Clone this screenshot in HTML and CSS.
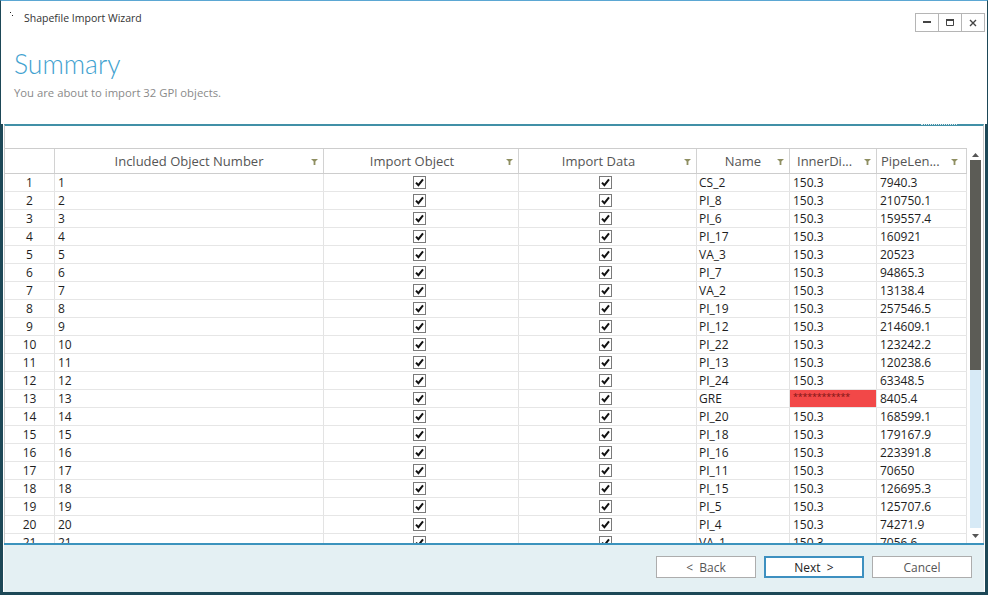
FILE: index.html
```html
<!DOCTYPE html>
<html>
<head>
<meta charset="utf-8">
<link rel="stylesheet" href="styles.css">
</head>
<body>
<div class="window">
  <div class="titlebar">
    <svg class="app-icon" width="4" height="6" viewBox="0 0 4 6"><rect x="0" y="0" width="1" height="1" fill="#222"/><rect x="2" y="3" width="1" height="1" fill="#222"/></svg>
    <span class="title">Shapefile Import Wizard</span>
    <div class="controls">
      <span class="ctl"><svg width="8" height="3" viewBox="0 0 8 3"><rect x="0" y="0" width="8" height="2" fill="#444"/></svg></span>
      <span class="ctl"><svg width="8" height="7" viewBox="0 0 8 7"><path d="M0.5 0.5H7.5V6.5H0.5Z" fill="none" stroke="#444"/><rect x="0" y="0" width="8" height="2" fill="#444"/></svg></span>
      <span class="ctl"><svg width="8" height="8" viewBox="0 0 8 8"><path d="M1 1L7 7M7 1L1 7" stroke="#444" stroke-width="1.4"/></svg></span>
    </div>
  </div>
  <div class="intro">
    <h1 class="heading">Summary</h1>
    <p class="subtitle">You are about to import 32 GPI objects.</p>
  </div>
  <div class="main">
    <div class="grid">
      <span class="grip"></span>
      <div class="group-panel"></div>
      <div class="grid-body">
        <div class="table">
          <div class="head row-grid">
            <div class="hc"></div>
            <div class="hc">Included Object Number<svg class="funnel" width="7" height="6" viewBox="0 0 7 6"><path d="M0 0H7L4.4 2.6V6H2.6V2.6Z"/></svg></div>
            <div class="hc shift">Import Object<svg class="funnel" width="7" height="6" viewBox="0 0 7 6"><path d="M0 0H7L4.4 2.6V6H2.6V2.6Z"/></svg></div>
            <div class="hc shift">Import Data<svg class="funnel" width="7" height="6" viewBox="0 0 7 6"><path d="M0 0H7L4.4 2.6V6H2.6V2.6Z"/></svg></div>
            <div class="hc">Name<svg class="funnel" width="7" height="6" viewBox="0 0 7 6"><path d="M0 0H7L4.4 2.6V6H2.6V2.6Z"/></svg></div>
            <div class="hc left inner">InnerDi...<svg class="funnel" width="7" height="6" viewBox="0 0 7 6"><path d="M0 0H7L4.4 2.6V6H2.6V2.6Z"/></svg></div>
            <div class="hc left pipe">PipeLen...<svg class="funnel far" width="7" height="6" viewBox="0 0 7 6"><path d="M0 0H7L4.4 2.6V6H2.6V2.6Z"/></svg></div>
          </div>
          <div class="rows" id="rows"></div>
        </div>
        <div class="vscroll">
          <div class="sb-up"><svg width="7" height="4" viewBox="0 0 7 4"><path d="M0 4L3.5 0L7 4Z" fill="#555"/></svg></div>
          <div class="thumb"></div>
          <div class="track"></div>
          <div class="sb-down"><svg width="7" height="4" viewBox="0 0 7 4"><path d="M0 0L3.5 4L7 0Z" fill="#555"/></svg></div>
        </div>
      </div>
    </div>
    <div class="footer">
      <button class="btn">&lt;&nbsp;&nbsp;Back</button>
      <button class="btn primary">Next&nbsp;&nbsp;&gt;</button>
      <button class="btn">Cancel</button>
    </div>
  </div>
</div>
<script src="app.js"></script>
</body>
</html>
```
FILE: styles.css
```css
* { box-sizing: border-box; }
html, body { margin: 0; padding: 0; }
body {
  width: 988px;
  height: 595px;
  overflow: hidden;
  background: #fff;
  font-family: "Open Sans", "Noto Sans", sans-serif;
}
svg { display: block; }
.window {
  width: 988px;
  height: 595px;
  border: 1px solid #1d4857;
  border-top-color: #5ba7d3;
  display: flex;
  flex-direction: column;
  background: #fff;
}
.titlebar {
  height: 39px;
  flex: none;
  display: flex;
  align-items: flex-start;
}
.app-icon { margin: 11px 0 0 9px; flex: none; }
.title {
  margin: 9px 0 0 10px;
  font-size: 10.5px;
  line-height: 16px;
  color: #333;
}
.controls {
  margin: 12px 2px 0 auto;
  display: flex;
}
.ctl {
  width: 24px;
  height: 19px;
  border: 1px solid #b5b5b5;
  background: #fff;
  display: flex;
  align-items: center;
  justify-content: center;
}
.ctl + .ctl { margin-left: -1px; }

.intro {
  height: 84px;
  flex: none;
  padding-left: 13px;
}
.heading {
  margin: 0;
  padding-top: 8px;
  font-family: Lato, "Open Sans", sans-serif;
  font-weight: 300;
  font-size: 26.5px;
  line-height: 32px;
  color: #42a2d0;
}
.subtitle {
  margin: 6px 0 0 0;
  font-size: 11.3px;
  line-height: 14px;
  color: #8a8a8a;
}

.main {
  flex: 1;
  min-height: 0;
  display: flex;
  flex-direction: column;
  border: 2px solid #1d4857;
  border-top: 0;
}
.grid {
  flex: 1;
  min-height: 0;
  margin: 0 1px;
  border-left: 1px solid #c8c8c8;
  border-right: 1px solid #c8c8c8;
  border-top: 2px solid #4190a7;
  display: flex;
  flex-direction: column;
  position: relative;
}
.grip {
  position: absolute;
  right: 26px;
  top: -2px;
  width: 36px;
  height: 0;
  border-top: 1px dotted rgba(255, 255, 255, 0.85);
}
.group-panel { height: 22px; flex: none; }
.grid-body {
  flex: 1;
  min-height: 0;
  display: flex;
}
.table {
  width: 962px;
  flex: none;
  display: flex;
  flex-direction: column;
  min-height: 0;
  overflow: hidden;
}
.row-grid {
  display: grid;
  grid-template-columns: 50px 269px 195px 178px 93px 87px 90px;
}
.head {
  height: 26px;
  flex: none;
  border-top: 1px solid #cdcdcd;
  border-bottom: 1px solid #cdcdcd;
}
.hc {
  position: relative;
  border-right: 1px solid #d2d2d2;
  display: flex;
  align-items: center;
  justify-content: center;
  font-size: 13px;
  line-height: 24px;
  color: #555;
  white-space: nowrap;
}
.hc.shift { padding-right: 18px; }
.hc.left { justify-content: flex-start; }
.hc.inner { padding-left: 7px; }
.hc.pipe { padding-left: 4px; }
.funnel {
  position: absolute;
  right: 5px;
  top: 10px;
  fill: #8f8f62;
}
.funnel.far { right: 8px; }

.rows { flex: 1; min-height: 0; overflow: hidden; }
.row {
  height: 18px;
  border-bottom: 1px solid #e6e6e6;
}
.c {
  border-right: 1px solid #e3e3e3;
  font-size: 12px;
  line-height: 17px;
  color: #1e1e1e;
  padding-left: 3px;
  white-space: nowrap;
  overflow: hidden;
}
.c.num { text-align: center; padding-left: 0; }
.c.name { padding-left: 2px; }
.c.chk {
  display: flex;
  align-items: center;
  justify-content: center;
  padding-left: 0;
}
.c.bad {
  background: #f24848;
  color: #7d1414;
  font-size: 9px;
  line-height: 14px;
  letter-spacing: -0.2px;
}
.cb {
  width: 13px;
  height: 13px;
  border: 1px solid #7a7a7a;
  background: #fff;
  display: flex;
  align-items: center;
  justify-content: center;
}
.chk .cb { margin-left: -4px; }

.vscroll {
  width: 16px;
  flex: none;
  display: flex;
  flex-direction: column;
  align-items: center;
}
.sb-up {
  height: 12px;
  flex: none;
  display: flex;
  align-items: flex-end;
  padding-bottom: 3px;
}
.thumb {
  width: 11px;
  height: 210px;
  flex: none;
  background: #5c5c56;
}
.track {
  width: 11px;
  flex: 1;
  background: #d7eaf6;
}
.sb-down {
  height: 15px;
  flex: none;
  display: flex;
  align-items: flex-start;
  padding-top: 6px;
}

.footer {
  height: 49px;
  flex: none;
  margin: 0 1px;
  background: #e4f0f3;
  border-top: 2px solid #3b93bd;
  display: flex;
  justify-content: flex-end;
  align-items: flex-start;
  gap: 8px;
  padding: 11px 12px 0 0;
}
.btn {
  width: 100px;
  height: 22px;
  padding: 0;
  border: 1px solid #adadad;
  background: #fff;
  font-family: "Open Sans", "Noto Sans", sans-serif;
  font-size: 12px;
  color: #555;
}
.btn.primary {
  border: 2px solid #3d90c0;
  color: #222;
}
```
FILE: app.js
```js
var data = [
  ["CS_2", "150.3", "7940.3"],
  ["PI_8", "150.3", "210750.1"],
  ["PI_6", "150.3", "159557.4"],
  ["PI_17", "150.3", "160921"],
  ["VA_3", "150.3", "20523"],
  ["PI_7", "150.3", "94865.3"],
  ["VA_2", "150.3", "13138.4"],
  ["PI_19", "150.3", "257546.5"],
  ["PI_12", "150.3", "214609.1"],
  ["PI_22", "150.3", "123242.2"],
  ["PI_13", "150.3", "120238.6"],
  ["PI_24", "150.3", "63348.5"],
  ["GRE", null, "8405.4"],
  ["PI_20", "150.3", "168599.1"],
  ["PI_18", "150.3", "179167.9"],
  ["PI_16", "150.3", "223391.8"],
  ["PI_11", "150.3", "70650"],
  ["PI_15", "150.3", "126695.3"],
  ["PI_5", "150.3", "125707.6"],
  ["PI_4", "150.3", "74271.9"],
  ["VA_1", "150.3", "7056.6"]
];
var check = '<span class="cb"><svg width="11" height="11" viewBox="0 0 11 11"><path d="M2 5.6L4.4 8.2L9 2.4" fill="none" stroke="#111" stroke-width="2"/></svg></span>';
var html = "";
for (var i = 0; i < data.length; i++) {
  var d = data[i];
  var n = i + 1;
  var inner = d[1] === null
    ? '<div class="c bad">************</div>'
    : '<div class="c">' + d[1] + '</div>';
  html += '<div class="row row-grid">' +
    '<div class="c num">' + n + '</div>' +
    '<div class="c">' + n + '</div>' +
    '<div class="c chk">' + check + '</div>' +
    '<div class="c chk">' + check + '</div>' +
    '<div class="c name">' + d[0] + '</div>' +
    inner +
    '<div class="c">' + d[2] + '</div>' +
    '</div>';
}
document.getElementById("rows").innerHTML = html;
```
